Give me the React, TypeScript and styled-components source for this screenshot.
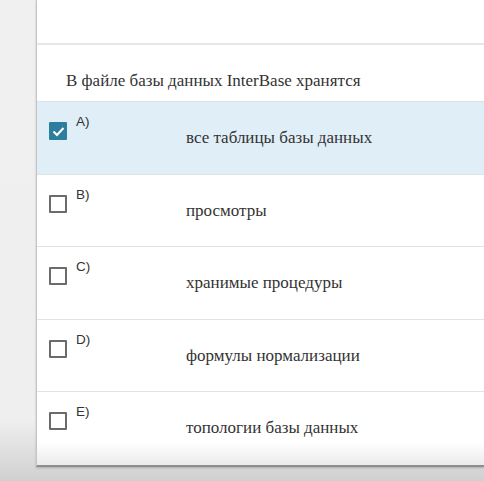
import { FunctionComponent } from 'react';
import styled, { createGlobalStyle } from 'styled-components';

interface IOption {
  letter: string;
  text: string;
  checked?: boolean;
}

const options: IOption[] = [
  { letter: 'A)', text: 'все таблицы базы данных', checked: true },
  { letter: 'B)', text: 'просмотры' },
  { letter: 'C)', text: 'хранимые процедуры' },
  { letter: 'D)', text: 'формулы нормализации' },
  { letter: 'E)', text: 'топологии базы данных' }
];

const serif = `'Times New Roman', 'Liberation Serif', 'DejaVu Serif', serif`;

const GlobalStyle = createGlobalStyle`
  html, body {
    margin: 0;
    padding: 0;
    width: 484px;
    height: 481px;
    overflow: hidden;
    background: #efefef;
  }
`;

const Page = styled.div`
  width: 484px;
  height: 481px;
  display: flex;
  flex-direction: column;
  background: linear-gradient(to bottom, #f0f0f0 0px, #efefef 420px, #d6d6d6 470px, #cfcfcf 481px);
`;

const Layout = styled.div`
  display: flex;
  padding-left: 36px;
`;

const Card = styled.div`
  flex: 1;
  background: #fff;
  border-left: 1px solid #c4c4c4;
  border-bottom: 2px solid #8e8e8e;
  box-shadow: 0 1px 2px rgba(0, 0, 0, 0.2);
`;

const TopBar = styled.div`
  height: 43px;
  border-bottom: 2px solid #e6e6e6;
`;

const Question = styled.div`
  height: 57px;
  padding-left: 29px;
  display: flex;
  align-items: flex-end;
  padding-bottom: 10px;
  box-sizing: border-box;
  font-family: ${serif};
  font-size: 17px;
  color: #333;
  border-bottom: 1px solid #d5e3ea;
`;

const Row = styled.div<{ $checked?: boolean }>`
  height: 72.5px;
  box-sizing: border-box;
  display: flex;
  align-items: flex-start;
  background: ${(p) => (p.$checked ? '#dfeef7' : '#fff')};
  border-bottom: 1px solid #e2e2e2;
  &:last-child {
    border-bottom: none;
    background: linear-gradient(to bottom, #fff 0px, #fff 50px, #ececec 72px);
  }
`;

const Box = styled.div<{ $checked?: boolean }>`
  width: 18px;
  height: 18px;
  box-sizing: border-box;
  margin: 20px 0 0 12px;
  border-radius: 1px;
  border: ${(p) => (p.$checked ? 'none' : '2px solid #6b6b6b')};
  background: ${(p) => (p.$checked ? '#2d7d9c' : 'transparent')};
  display: flex;
  align-items: center;
  justify-content: center;
`;

const Letter = styled.span`
  margin: 12px 0 0 9px;
  width: 110px;
  font-family: 'Liberation Sans', Arial, sans-serif;
  font-size: 13.5px;
  color: #333;
`;

const Answer = styled.span`
  margin-top: 26px;
  font-family: ${serif};
  font-size: 17px;
  color: #333;
`;

const Bottom = styled.div`
  flex: 1;
`;

const Option: FunctionComponent<IOption> = ({ letter, text, checked }) => (
  <Row $checked={checked}>
    <Box $checked={checked}>
      {checked && (
        <svg width="13" height="11" viewBox="0 0 13 11">
          <path d="M1.5 5.5 L5 9 L11.5 2" fill="none" stroke="#fff" strokeWidth="2" />
        </svg>
      )}
    </Box>
    <Letter>{letter}</Letter>
    <Answer>{text}</Answer>
  </Row>
);

const App: FunctionComponent = () => (
  <Page>
    <GlobalStyle />
    <Layout>
      <Card>
        <TopBar />
        <Question>В файле базы данных InterBase хранятся</Question>
        {options.map((o) => (
          <Option key={o.letter} {...o} />
        ))}
      </Card>
    </Layout>
    <Bottom />
  </Page>
);

export default App;
